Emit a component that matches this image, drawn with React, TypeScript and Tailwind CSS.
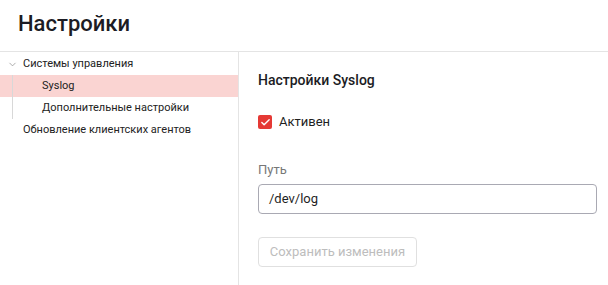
import { ChevronDown, Check } from 'lucide-react'

const font = { fontFamily: 'Roboto, "Liberation Sans", sans-serif' }

const App = () => {
  return (
    <div className="w-[608px] h-[285px] bg-white text-[#1f1f1f] flex flex-col overflow-hidden" style={font}>
      {/* Шапка */}
      <div className="h-[52px] border-b border-[#e4e4e4] flex items-center px-[18px]">
        <h1 className="text-[22px] font-medium text-[#1c1c24] pb-[5px]">Настройки</h1>
      </div>

      <div className="flex flex-1">
        {/* Дерево */}
        <div className="w-[239px] border-r border-[#e4e4e4] pt-[1px] text-[11px] text-[#222]">
          <div className="h-[22px] flex items-center">
            <ChevronDown size={11} strokeWidth={1.5} className="ml-[7px] mr-[5px] text-[#888]" />
            <span>Системы управления</span>
          </div>
          <div className="relative">
            <div className="absolute left-[12px] top-0 bottom-0 w-px bg-[#d8d8d8]" />
            <div className="h-[22px] flex items-center pl-[42px] bg-[#fad4d2]">Syslog</div>
            <div className="h-[22px] flex items-center pl-[42px]">Дополнительные настройки</div>
          </div>
          <div className="h-[22px] flex items-center pl-[23px]">Обновление клиентских агентов</div>
        </div>

        {/* Форма */}
        <div className="flex-1 pl-[19px] pr-[11px] pt-[17px]">
          <h2 className="text-[14px] font-medium text-[#1c1c24] h-[22px] flex items-center">Настройки Syslog</h2>
          <label className="flex items-center gap-[7px] mt-[23px] h-[16px]">
            <span className="w-[14px] h-[14px] rounded-[2px] bg-[#e53935] flex items-center justify-center">
              <Check size={11} strokeWidth={3} className="text-white" />
            </span>
            <span className="text-[13px] text-[#1f1f1f]">Активен</span>
          </label>
          <div className="mt-[32px] text-[13px] text-[#777] h-[16px] flex items-center">Путь</div>
          <div className="mt-[6px] h-[30px] border border-[#a9a9b3] rounded-[4px] flex items-center px-[10px] text-[13px] text-[#1f1f1f]">
            /dev/log
          </div>
          <button
            type="button"
            disabled
            className="mt-[23px] h-[30px] w-[159px] border border-[#e0e0e0] rounded-[4px] text-[13px] text-[#bdbdbd] flex items-center justify-center"
          >
            Сохранить изменения
          </button>
        </div>
      </div>
    </div>
  )
}

export default App
